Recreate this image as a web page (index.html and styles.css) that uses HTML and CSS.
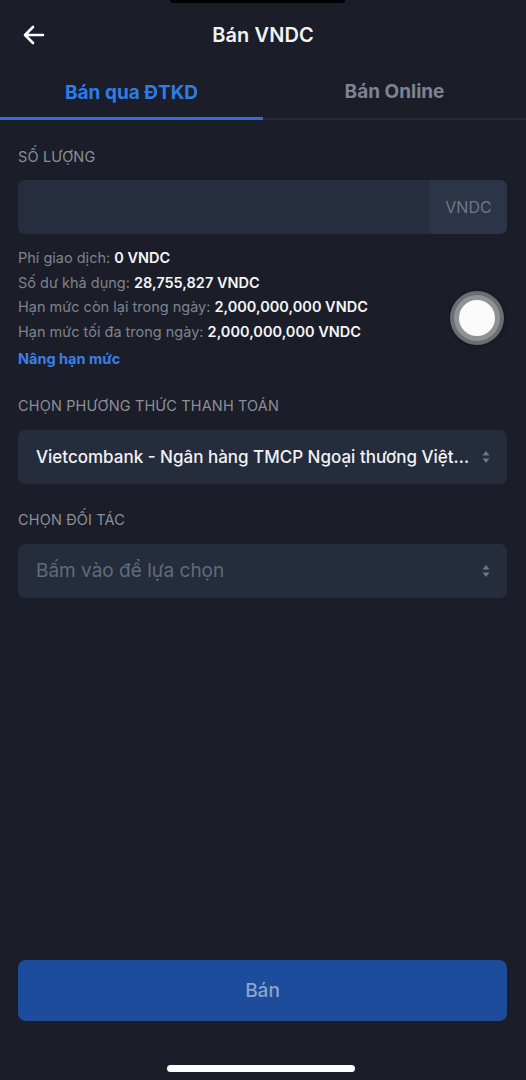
FILE: index.html
```html
<!DOCTYPE html>
<html lang="vi">
<head>
<meta charset="utf-8">
<title>Bán VNDC</title>
<link rel="stylesheet" href="styles.css">
</head>
<body>
<div class="screen">
  <div class="notch"></div>
  <header class="topbar">
    <svg class="back" width="22" height="20" viewBox="0 0 22 20" fill="none" stroke="#fff" stroke-width="2.6" stroke-linecap="round" stroke-linejoin="round"><path d="M20 10H3M10 2L2 10l8 8"/></svg>
    <h1 class="title">Bán VNDC</h1>
  </header>
  <nav class="tabs">
    <div class="tab active">Bán qua ĐTKD</div>
    <div class="tab">Bán Online</div>
  </nav>
  <main class="content">
    <div class="label">SỐ LƯỢNG</div>
    <div class="input">
      <div class="input-field"></div>
      <div class="suffix">VNDC</div>
    </div>
    <ul class="info">
      <li>Phí giao dịch: <b>0 VNDC</b></li>
      <li>Số dư khả dụng: <b>28,755,827 VNDC</b></li>
      <li>Hạn mức còn lại trong ngày: <b>2,000,000,000 VNDC</b></li>
      <li>Hạn mức tối đa trong ngày: <b>2,000,000,000 VNDC</b></li>
    </ul>
    <a class="upgrade">Nâng hạn mức</a>
    <div class="label label-2">CHỌN PHƯƠNG THỨC THANH TOÁN</div>
    <div class="select">
      <span class="select-text">Vietcombank - Ngân hàng TMCP Ngoại thương Việt...</span>
      <svg class="caret" width="8" height="14" viewBox="0 0 8 14"><path d="M4 1L7.5 5.5H0.5Z M4 13L0.5 8.5H7.5Z" fill="#6f7688"/></svg>
    </div>
    <div class="label label-3">CHỌN ĐỐI TÁC</div>
    <div class="select">
      <span class="select-text placeholder">Bấm vào để lựa chọn</span>
      <svg class="caret" width="8" height="14" viewBox="0 0 8 14"><path d="M4 1L7.5 5.5H0.5Z M4 13L0.5 8.5H7.5Z" fill="#6f7688"/></svg>
    </div>
  </main>
  <div class="footer">
    <button class="btn">Bán</button>
  </div>
  <div class="home-bar"></div>
  <div class="assist"><div class="assist-ring"><div class="assist-dot"></div></div></div>
</div>
</body>
</html>
```
FILE: styles.css
```css
* { box-sizing: border-box; }
html, body { margin: 0; padding: 0; background: #1b1e28; }
body { font-family: Inter, "Noto Sans", "Liberation Sans", sans-serif; color: #fff; }
.screen { position: relative; width: 526px; height: 1080px; background: #1b1e28; display: flex; flex-direction: column; overflow: hidden; }
.notch { position: absolute; top: 0; left: 170px; width: 175px; height: 3px; background: #000; border-radius: 0 0 3px 3px; }
.topbar { position: relative; height: 70px; display: flex; align-items: center; justify-content: center; }
.back { position: absolute; left: 23px; top: 25px; }
.title { margin: 0; font-size: 20px; font-weight: 600; color: #f2f3f5; letter-spacing: 0.1px; }
.tabs { display: flex; height: 50px; border-bottom: 2px solid #252a36; }
.tab { flex: 1; display: flex; align-items: center; justify-content: center; font-size: 19px; font-weight: 700; color: #7d838f; padding-bottom: 5px; }
.tab.active { color: #2f7ce9; border-bottom: 3px solid #2f6fde; margin-bottom: -2px; padding-bottom: 2px; }
.content { padding: 0 19px 0 18px; display: flex; flex-direction: column; flex: 1; }
.label { font-size: 14.5px; color: #8a8f9a; margin-top: 28px; line-height: 18px; letter-spacing: 0.15px; }
.label-2 { margin-top: 28px; }
.label-3 { margin-top: 27px; }
.input { margin-top: 14px; height: 54px; border-radius: 7px; background: #262d3e; display: flex; overflow: hidden; }
.input-field { flex: 1; }
.suffix { width: 77px; background: #2c3447; display: flex; align-items: center; justify-content: center; font-size: 16px; color: #6f7789; }
.info { list-style: none; margin: 12px 0 0; padding: 0; font-size: 14.5px; color: #7e838e; }
.info li { line-height: 24.7px; }
.info b { color: #f4f5f7; font-weight: 600; }
.upgrade { margin-top: 4px; font-size: 14.5px; font-weight: 700; color: #3a80e6; line-height: 20px; }
.select { margin-top: 15px; height: 54px; border-radius: 7px; background: #252c3c; display: flex; align-items: center; padding: 0 17px 0 18px; }
.select-text { flex: 1; font-size: 17px; font-weight: 500; color: #f2f3f5; white-space: nowrap; overflow: hidden; }
.select-text.placeholder { font-size: 19px; font-weight: 400; color: #636a7a; }
.caret { flex: none; margin-left: 8px; }
.footer { padding: 0 19px 0 18px; margin-bottom: 59px; }
.btn { width: 100%; height: 61px; border: 0; border-radius: 8px; background: #1d4c9c; color: #8ea4c8; font-family: inherit; font-size: 19px; font-weight: 500; }
.home-bar { position: absolute; left: 167px; bottom: 8px; width: 188px; height: 7px; border-radius: 4px; background: #fff; }
.assist { position: absolute; left: 450px; top: 291px; width: 54px; height: 54px; border-radius: 50%; background: #6c6e73; display: flex; align-items: center; justify-content: center; box-shadow: 0 0 4px rgba(0,0,0,0.4); }
.assist-ring { width: 46px; height: 46px; border-radius: 50%; background: #8f9196; display: flex; align-items: center; justify-content: center; }
.assist-dot { width: 36px; height: 36px; border-radius: 50%; background: #fbfbfb; }
```
